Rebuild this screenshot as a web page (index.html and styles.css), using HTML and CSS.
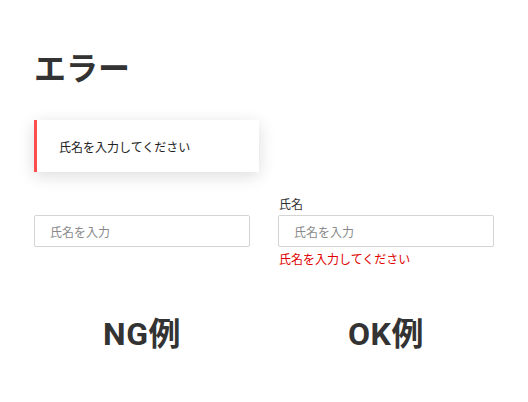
FILE: index.html
```html
<!DOCTYPE html>
<html lang="ja">
<head>
<meta charset="utf-8">
<link rel="stylesheet" href="styles.css">
</head>
<body>
<main class="page">
  <h1 class="title">エラー</h1>
  <div class="toast">氏名を入力してください</div>
  <div class="examples">
    <div class="col">
      <div class="label"></div>
      <div class="input">氏名を入力</div>
      <div class="error"></div>
      <div class="caption">NG例</div>
    </div>
    <div class="col">
      <div class="label">氏名</div>
      <div class="input">氏名を入力</div>
      <div class="error">氏名を入力してください</div>
      <div class="caption">OK例</div>
    </div>
  </div>
</main>
</body>
</html>
```
FILE: styles.css
```css
html, body {
  margin: 0;
  padding: 0;
  background: #ffffff;
}
body {
  font-family: "Noto Sans CJK JP", "Noto Sans", sans-serif;
  color: #333333;
}
.page {
  padding: 43px 34px 0 34px;
  width: 460px;
}
.title {
  margin: 0;
  font-size: 32px;
  font-weight: 700;
  line-height: 46px;
  color: #333333;
}
.toast {
  margin-top: 31px;
  width: 225px;
  height: 52px;
  box-sizing: border-box;
  border-left: 3px solid #ff4e4e;
  padding-left: 22px;
  display: flex;
  align-items: center;
  font-size: 12px;
  color: #222222;
  background: #ffffff;
  box-shadow: 0 4px 16px rgba(0, 0, 0, 0.14);
}
.examples {
  margin-top: 22px;
  display: grid;
  grid-template-columns: 216px 216px;
  column-gap: 28px;
}
.col {
  display: flex;
  flex-direction: column;
}
.label {
  height: 21px;
  font-size: 12px;
  line-height: 19px;
  padding-left: 1px;
  color: #333333;
}
.input {
  height: 32px;
  box-sizing: border-box;
  border: 1px solid #d4d4d4;
  border-radius: 2px;
  padding-left: 15px;
  display: flex;
  align-items: center;
  font-size: 12px;
  color: #8a8a8a;
}
.error {
  height: 24px;
  font-size: 12px;
  line-height: 24px;
  padding-left: 1px;
  color: #e00000;
}
.caption {
  margin-top: 45px;
  text-align: center;
  font-family: Roboto, "Noto Sans CJK JP", sans-serif;
  font-size: 32px;
  font-weight: 700;
  letter-spacing: 0.5px;
  line-height: 36px;
  color: #333333;
}
```
